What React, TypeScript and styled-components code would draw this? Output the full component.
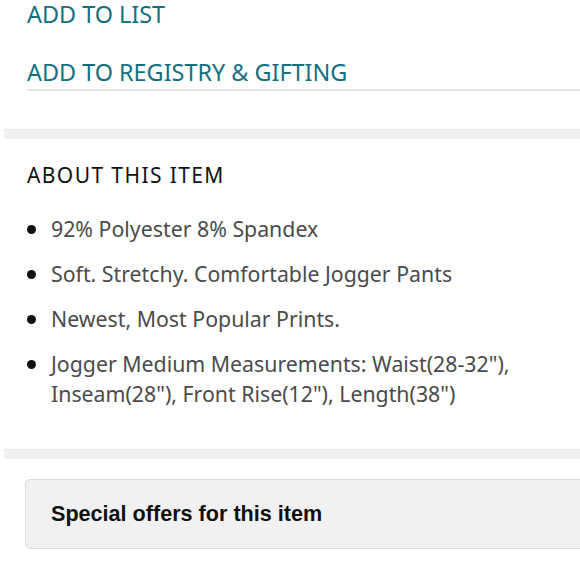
import React from 'react';
import styled, { createGlobalStyle } from 'styled-components';

const GlobalStyle = createGlobalStyle`
  html, body {
    margin: 0;
    padding: 0;
    background: #ffffff;
    overflow: hidden;
  }
`;

const Page = styled.div`
  width: 580px;
  height: 580px;
  display: flex;
  flex-direction: column;
  font-family: 'Noto Sans', 'DejaVu Sans', sans-serif;
  background: #ffffff;
  overflow: hidden;
`;

const Actions = styled.div`
  display: flex;
  flex-direction: column;
  gap: 30px;
  margin-left: 27px;
  padding-bottom: 3px;
  border-bottom: 2px solid #e6e7e9;
`;

const ActionLink = styled.a`
  font-size: 23.4px;
  line-height: 28px;
  color: #14707f;
  text-decoration: none;
`;

const Band = styled.div`
  margin: 38px 0 0 4px;
  height: 9px;
  background: #f1f1f2;
  border-top: 1px solid #e8e8e8;
`;

const About = styled.section`
  padding: 23px 0 2px 27px;
`;

const Heading = styled.h2`
  margin: 0;
  font-size: 21px;
  line-height: 26px;
  font-weight: 400;
  letter-spacing: 1.4px;
  color: #111111;
`;

const Bullets = styled.ul`
  list-style: none;
  margin: 26px 0 0;
  padding: 0;
  display: flex;
  flex-direction: column;
  gap: 15px;
`;

const Bullet = styled.li`
  display: flex;
  gap: 15px;
  font-size: 21.3px;
  line-height: 30px;
  color: #4b4b4b;

  &:before {
    content: '';
    flex: none;
    width: 9px;
    height: 9px;
    margin-top: 11px;
    border-radius: 50%;
    background: #111111;
  }
`;

const OfferBox = styled.div`
  margin: 20px -10px 0 25px;
  height: 68px;
  display: flex;
  align-items: center;
  padding-left: 25px;
  background: #f1f1f1;
  border: 1px solid #dcdcdc;
  border-radius: 5px;
`;

const OfferTitle = styled.span`
  font-family: 'Liberation Sans', Arial, sans-serif;
  font-size: 21.6px;
  font-weight: 700;
  color: #0f1111;
`;

const items = [
  '92% Polyester 8% Spandex',
  'Soft. Stretchy. Comfortable Jogger Pants',
  'Newest, Most Popular Prints.',
  'Jogger Medium Measurements: Waist(28-32"), Inseam(28"), Front Rise(12"), Length(38")',
];

function App() {
  return (
    <Page>
      <GlobalStyle />
      <Actions>
        <ActionLink href="#">ADD TO LIST</ActionLink>
        <ActionLink href="#">ADD TO REGISTRY &amp; GIFTING</ActionLink>
      </Actions>
      <Band />
      <About>
        <Heading>ABOUT THIS ITEM</Heading>
        <Bullets>
          {items.map((text) => (
            <Bullet key={text}>{text}</Bullet>
          ))}
        </Bullets>
      </About>
      <Band />
      <OfferBox>
        <OfferTitle>Special offers for this item</OfferTitle>
      </OfferBox>
    </Page>
  );
}

export default App;
